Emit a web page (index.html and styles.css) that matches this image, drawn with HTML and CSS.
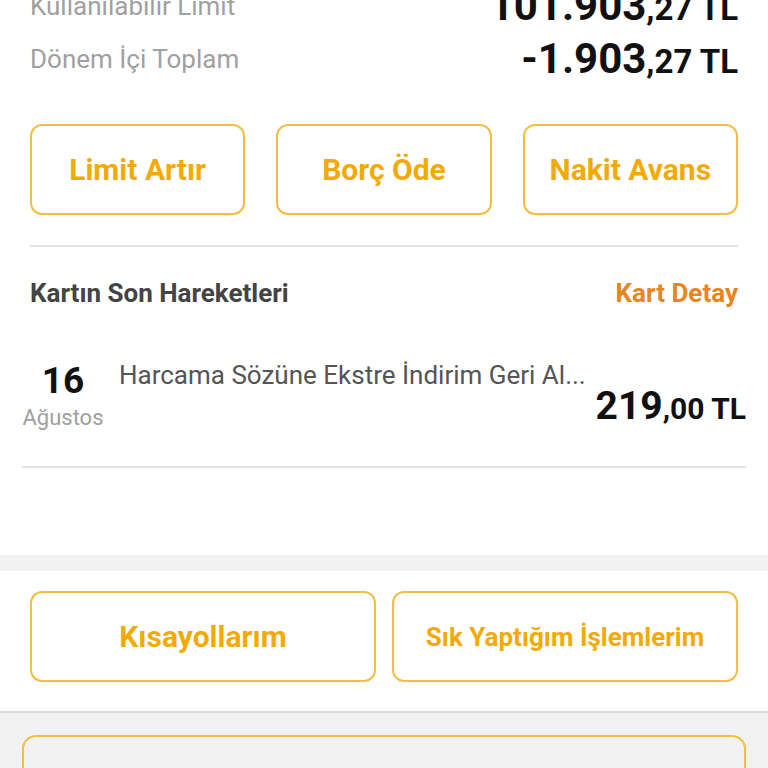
FILE: index.html
```html
<!DOCTYPE html>
<html lang="tr">
<head>
    <meta charset="UTF-8">
    <meta name="viewport" content="width=device-width, initial-scale=1.0">
    <title>Kart Özeti</title>
    <link rel="stylesheet" href="styles.css">
</head>
<body>
    <div class="card">
        <div class="summary">
            <div class="summary-row">
                <span class="label">Kullanılabilir Limit</span>
                <span class="amount">101.903<small>,27 TL</small></span>
            </div>
            <div class="summary-row">
                <span class="label">Dönem İçi Toplam</span>
                <span class="amount">-1.903<small>,27 TL</small></span>
            </div>
        </div>

        <div class="actions">
            <button class="outline-btn">Limit Artır</button>
            <button class="outline-btn">Borç Öde</button>
            <button class="outline-btn">Nakit Avans</button>
        </div>

        <div class="divider"></div>

        <div class="movements">
            <div class="movements-head">
                <span class="movements-title">Kartın Son Hareketleri</span>
                <a class="detail-link" href="#">Kart Detay</a>
            </div>

            <div class="movement">
                <div class="movement-date">
                    <span class="day">16</span>
                    <span class="month">Ağustos</span>
                </div>
                <div class="movement-body">
                    <span class="movement-desc">Harcama Sözüne Ekstre İndirim Geri Al...</span>
                    <span class="movement-amount">219<small>,00 TL</small></span>
                </div>
            </div>
        </div>
    </div>

    <div class="shortcuts">
        <button class="outline-btn">Kısayollarım</button>
        <button class="outline-btn small-text">Sık Yaptığım İşlemlerim</button>
    </div>

    <div class="more">
        <div class="more-box"></div>
    </div>
</body>
</html>
```

FILE: styles.css
```css
body {
    margin: 0;
    background: #f2f2f2;
    font-family: Roboto, 'Liberation Sans', sans-serif;
    overflow: hidden;
}

.card {
    background: #ffffff;
    padding: 0 30px 87px;
}

.summary {
    margin-top: -20px;
}

.summary-row {
    display: flex;
    justify-content: space-between;
    align-items: center;
    height: 53px;
}

.label {
    font-size: 26px;
    line-height: 53px;
    color: #a0a0a0;
}

.amount {
    font-size: 42px;
    line-height: 53px;
    font-weight: 700;
    color: #111;
}

.amount small {
    font-size: 33px;
}

.actions {
    display: grid;
    grid-template-columns: repeat(3, 1fr);
    gap: 31px;
    margin-top: 38px;
}

.outline-btn {
    height: 91px;
    background: #ffffff;
    border: 2px solid #f4be45;
    border-radius: 12px;
    color: #f3aa06;
    font-family: inherit;
    font-size: 30px;
    font-weight: 700;
    cursor: pointer;
}

.outline-btn.small-text {
    font-size: 26px;
}

.divider {
    height: 2px;
    margin-top: 30px;
    background: #e4e4e4;
}

.movements {
    margin: 0 -8px;
}

.movements-head {
    display: flex;
    justify-content: space-between;
    margin-top: 28px;
    padding: 0 8px;
    line-height: 36px;
}

.movements-title {
    font-size: 26px;
    font-weight: 700;
    color: #444;
}

.detail-link {
    font-size: 26px;
    font-weight: 700;
    color: #e8861e;
    text-decoration: none;
}

.movement {
    display: grid;
    grid-template-columns: 82px 1fr;
    gap: 15px;
    padding: 50px 0 31px;
    border-bottom: 2px solid #e4e4e4;
}

.movement-date {
    display: flex;
    flex-direction: column;
    align-items: center;
}

.day {
    font-size: 37px;
    line-height: 40px;
    font-weight: 700;
    color: #111;
}

.month {
    font-size: 22px;
    line-height: 34px;
    color: #a0a0a0;
}

.movement-body {
    display: flex;
    flex-direction: column;
}

.movement-desc {
    font-size: 26px;
    line-height: 28px;
    color: #555;
}

.movement-amount {
    align-self: flex-end;
    font-size: 39px;
    line-height: 34px;
    font-weight: 700;
    color: #111;
}

.movement-amount small {
    font-size: 30px;
}

.shortcuts {
    display: grid;
    grid-template-columns: 1fr 1fr;
    gap: 16px;
    margin-top: 16px;
    padding: 20px 30px 29px;
    background: #ffffff;
    border-bottom: 2px solid #dcdcdc;
}

.more {
    padding: 22px 22px 0;
}

.more-box {
    height: 80px;
    border: 2px solid #f4be45;
    border-radius: 14px;
}
```
